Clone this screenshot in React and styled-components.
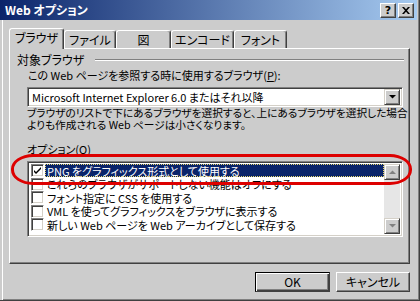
import React from "react";
import styled, { createGlobalStyle } from "styled-components";

const face = "#cccccc";

const GlobalStyle = createGlobalStyle`
  html, body { margin: 0; padding: 0; background: ${face}; }
  body {
    font-family: "Noto Sans CJK JP", "DejaVu Sans", sans-serif;
    font-size: 11px;
    font-feature-settings: "palt";
    color: #000;
  }
`;

const Window = styled.div`
  position: relative;
  width: 420px;
  height: 301px;
  box-sizing: border-box;
  background: ${face};
  border-right: 1px solid #404040;
  border-bottom: 1px solid #404040;
  box-shadow: inset -1px -1px 0 #808080;
  display: flex;
  flex-direction: column;
  overflow: hidden;
`;

const TitleBar = styled.div`
  height: 20px;
  margin-right: 2px;
  background: linear-gradient(to right, #0a246a, #a6caf0);
  display: flex;
  align-items: center;
  padding: 0 3px 0 5px;
`;

const TitleText = styled.div`
  flex: 1;
  color: #fff;
  font-weight: bold;
  font-size: 12px;
  line-height: 14px;
`;

const CaptionButton = styled.div`
  width: 16px;
  height: 15px;
  box-sizing: border-box;
  margin-left: ${(p) => p.gap || 0}px;
  background: ${face};
  border-top: 1px solid #fff;
  border-left: 1px solid #fff;
  border-right: 1px solid #404040;
  border-bottom: 1px solid #404040;
  box-shadow: inset -1px -1px 0 #808080;
  display: flex;
  align-items: center;
  justify-content: center;
`;

const HelpMark = styled.span`
  font-family: "DejaVu Sans", sans-serif;
  font-weight: bold;
  font-size: 11px;
  line-height: 11px;
`;

const Body = styled.div`
  flex: 1;
  padding: 8px 9px 0 9px;
  box-shadow: inset 2px 0 0 ${face}, inset 3px 0 0 #fff;
`;

const TabRow = styled.div`
  display: flex;
  align-items: flex-end;
  height: 20px;
  position: relative;
  z-index: 2;
`;

const Tab = styled.div`
  width: ${(p) => p.w}px;
  height: ${(p) => (p.active ? 21 : 18)}px;
  margin-bottom: ${(p) => (p.active ? -1 : 0)}px;
  box-sizing: border-box;
  background: ${face};
  border-top: 1px solid #fff;
  border-left: 1px solid #fff;
  border-right: 1px solid #404040;
  box-shadow: inset -1px 0 0 #808080;
  border-radius: 3px 3px 0 0;
  display: flex;
  align-items: center;
  justify-content: center;
  padding-bottom: ${(p) => (p.active ? 3 : 0)}px;
  font-size: 12px;
  line-height: 12px;
`;

const Panel = styled.div`
  width: 401px;
  height: 216px;
  box-sizing: border-box;
  border-top: 1px solid #fff;
  border-left: 1px solid #fff;
  border-right: 1px solid #404040;
  border-bottom: 1px solid #404040;
  box-shadow: inset -1px -1px 0 #808080;
  padding: 5px 5px 0 7px;
  display: flex;
  flex-direction: column;
  align-items: flex-start;
  line-height: 12px;
`;

const GroupHeader = styled.div`
  display: flex;
  align-items: center;
  align-self: stretch;
  height: 12px;
  font-size: 12px;
`;

const GroupLine = styled.div`
  flex: 1;
  margin-left: 11px;
  height: 0;
  border-top: 1px solid #808080;
  border-bottom: 1px solid #fff;
`;

const Text = styled.div`
  margin-left: ${(p) => p.left || 10}px;
  margin-top: ${(p) => p.top || 0}px;
  font-size: ${(p) => p.size || 11}px;
  white-space: nowrap;
`;

const Sunken = styled.div`
  box-sizing: border-box;
  background: #fff;
  border-top: 1px solid #808080;
  border-left: 1px solid #808080;
  border-right: 1px solid #fff;
  border-bottom: 1px solid #fff;
  box-shadow: inset 1px 1px 0 #404040, inset -1px -1px 0 #d4d0c8;
`;

const Select = styled(Sunken)`
  width: 376px;
  height: 20px;
  margin: 6px 0 0 10px;
  display: flex;
  align-items: center;
  padding: 2px 2px 2px 4px;
`;

const SelectValue = styled.div`
  flex: 1;
  font-size: 11px;
`;

const ArrowButton = styled.div`
  width: 16px;
  height: 16px;
  box-sizing: border-box;
  background: ${face};
  border-top: 1px solid #d4d0c8;
  border-left: 1px solid #d4d0c8;
  border-right: 1px solid #404040;
  border-bottom: 1px solid #404040;
  box-shadow: inset 1px 1px 0 #fff, inset -1px -1px 0 #808080;
  display: flex;
  align-items: center;
  justify-content: center;
`;

const ListBox = styled(Sunken)`
  width: 376px;
  height: 76px;
  margin: 6px 0 0 10px;
  padding: 2px;
  display: flex;
`;

const Rows = styled.div`
  flex: 1;
  display: flex;
  flex-direction: column;
`;

const Row = styled.div`
  height: 13.5px;
  display: flex;
  align-items: center;
  white-space: nowrap;
`;

const CheckBox = styled(Sunken)`
  width: 13px;
  height: 13px;
  margin-left: 1px;
  flex: none;
  display: flex;
  align-items: center;
  justify-content: center;
`;

const RowLabel = styled.div`
  flex: 1;
  margin-left: 1px;
  height: 13px;
  box-sizing: border-box;
  padding: 0 2px;
  display: flex;
  align-items: center;
  line-height: 12px;
  font-size: 11px;
  background: ${(p) => (p.selected ? "#0a246a" : "transparent")};
  color: ${(p) => (p.selected ? "#fff" : "#000")};
  outline: ${(p) => (p.selected ? "1px dotted #e8d870" : "none")};
  outline-offset: -1px;
`;

const ScrollBar = styled.div`
  width: 16px;
  display: flex;
  flex-direction: column;
  justify-content: space-between;
  background: #e6e6e6;
`;

const ButtonRow = styled.div`
  display: flex;
  justify-content: flex-end;
  gap: 6px;
  margin-top: 8px;
`;

const PushButton = styled.div`
  width: ${(p) => p.w}px;
  height: 20px;
  box-sizing: border-box;
  background: ${face};
  border: 1px solid ${(p) => (p.primary ? "#000" : face)};
  border-top-color: ${(p) => (p.primary ? "#000" : "#fff")};
  border-left-color: ${(p) => (p.primary ? "#000" : "#fff")};
  border-right-color: #404040;
  border-bottom-color: #404040;
  box-shadow: ${(p) =>
    p.primary
      ? "inset 1px 1px 0 #fff, inset -1px -1px 0 #404040, inset -2px -2px 0 #808080"
      : "inset -1px -1px 0 #808080"};
  display: flex;
  align-items: center;
  justify-content: center;
  font-size: 12px;
  line-height: 12px;
`;

const Annotation = styled.div`
  position: absolute;
  left: 11px;
  top: 154px;
  width: 401px;
  height: 31px;
  box-sizing: border-box;
  border: 3px solid #dd0000;
  border-radius: 22px / 15px;
  pointer-events: none;
`;

const Underline = styled.span`
  text-decoration: underline;
`;

const Triangle = ({ up, color = "#000" }) => (
  <svg width="7" height="4" viewBox="0 0 7 4">
    {up ? (
      <polygon points="0,4 7,4 3.5,0.5" fill={color} />
    ) : (
      <polygon points="0,0 7,0 3.5,3.5" fill={color} />
    )}
  </svg>
);

const Check = () => (
  <svg width="9" height="9" viewBox="0 0 9 9">
    <path d="M1 4 L3 6 L8 1 L8 3 L3 8 L1 6 Z" fill="#000" />
  </svg>
);

const tabs = [
  { label: "ブラウザ", w: 55, active: true },
  { label: "ファイル", w: 52 },
  { label: "図", w: 55 },
  { label: "エンコード", w: 63 },
  { label: "フォント", w: 53 },
];

const options = [
  { label: "PNG をグラフィックス形式として使用する", checked: true, selected: true },
  { label: "これらのブラウザがサポートしない機能はオフにする" },
  { label: "フォント指定に CSS を使用する" },
  { label: "VML を使ってグラフィックスをブラウザに表示する" },
  { label: "新しい Web ページを Web アーカイブとして保存する" },
];

export default function App() {
  return (
    <>
      <GlobalStyle />
      <Window>
        <TitleBar>
          <TitleText>Web オプション</TitleText>
          <CaptionButton>
            <HelpMark>?</HelpMark>
          </CaptionButton>
          <CaptionButton gap={2}>
            <svg width="8" height="7" viewBox="0 0 8 7">
              <path d="M0 0 L2 0 L4 2.3 L6 0 L8 0 L5 3.5 L8 7 L6 7 L4 4.7 L2 7 L0 7 L3 3.5 Z" fill="#000" />
            </svg>
          </CaptionButton>
        </TitleBar>
        <Body>
          <TabRow>
            {tabs.map((t) => (
              <Tab key={t.label} w={t.w} active={t.active}>
                {t.label}
              </Tab>
            ))}
          </TabRow>
          <Panel>
            <GroupHeader>
              <span>対象ブラウザ</span>
              <GroupLine />
            </GroupHeader>
            <Text left={11} top={3}>
              この Web ページを参照する時に使用するブラウザ(<Underline>P</Underline>):
            </Text>
            <Select>
              <SelectValue>Microsoft Internet Explorer 6.0 またはそれ以降</SelectValue>
              <ArrowButton>
                <Triangle />
              </ArrowButton>
            </Select>
            <Text size={10.7}>
              ブラウザのリストで下にあるブラウザを選択すると、上にあるブラウザを選択した場合
              <br />
              よりも作成される Web ページは小さくなります。
            </Text>
            <Text top={12}>
              オプション(<Underline>O</Underline>)
            </Text>
            <ListBox>
              <Rows>
                {options.map((o) => (
                  <Row key={o.label}>
                    <CheckBox>{o.checked && <Check />}</CheckBox>
                    <RowLabel selected={o.selected}>{o.label}</RowLabel>
                  </Row>
                ))}
              </Rows>
              <ScrollBar>
                <ArrowButton>
                  <Triangle up color="#808080" />
                </ArrowButton>
                <ArrowButton>
                  <Triangle color="#808080" />
                </ArrowButton>
              </ScrollBar>
            </ListBox>
          </Panel>
          <ButtonRow>
            <PushButton w={75} primary>
              OK
            </PushButton>
            <PushButton w={74}>キャンセル</PushButton>
          </ButtonRow>
        </Body>
        <Annotation />
      </Window>
    </>
  );
}
